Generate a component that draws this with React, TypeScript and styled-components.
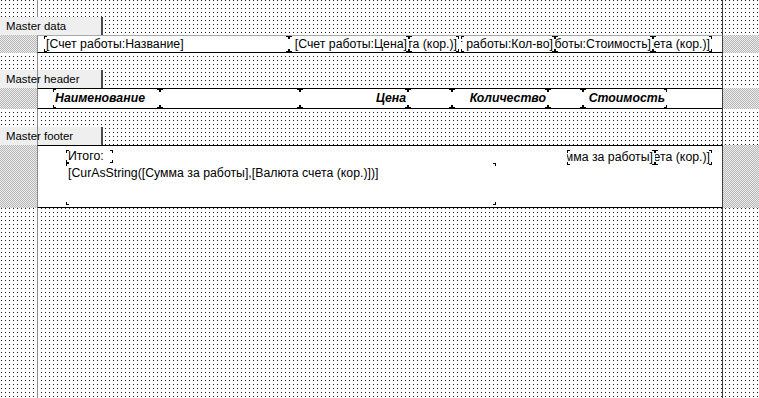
import styled, { createGlobalStyle, css } from 'styled-components'

const GlobalStyle = createGlobalStyle`
  html, body {
    margin: 0;
    padding: 0;
    background: #fff;
    overflow: hidden;
  }
  body {
    font-family: "Liberation Sans", Arial, sans-serif;
    color: #000;
  }
`

const INK = 'linear-gradient(#000, #000)'

// little corner marks that the designer draws round each text object
const corners = css`
  background-image: ${Array(8).fill(INK).join(', ')};
  background-repeat: no-repeat;
  background-size: 1px 3px, 3px 1px, 1px 3px, 3px 1px, 1px 3px, 3px 1px, 1px 3px, 3px 1px;
  background-position: left top, left top, right top, right top, left bottom, left bottom, right bottom,
    right bottom;
`

const Page = styled.div`
  width: 759px;
  height: 398px;
  display: flex;
  flex-direction: column;
  background:
    linear-gradient(
      90deg,
      transparent 37px,
      #8a8a8a 37px,
      #8a8a8a 38px,
      transparent 38px,
      transparent 722px,
      #404040 722px,
      #404040 723px,
      transparent 723px
    ),
    linear-gradient(90deg, transparent 1px, #fff 1px) 1px 0 / 4px 4px,
    linear-gradient(180deg, transparent 1px, #fff 1px) 1px 0 / 4px 4px,
    #1a1a1a;
`

const Gap = styled.div<{ $h: number }>`
  height: ${(p) => p.$h}px;
  flex: none;
`

const TabRow = styled.div`
  display: flex;
  height: 18px;
  flex: none;
`

const Tab = styled.div<{ $cut?: boolean }>`
  width: 95px;
  padding-left: 6px;
  border-right: 2px solid #4a4a4a;
  background: ${(p) =>
    p.$cut
      ? 'linear-gradient(90deg, transparent 37px, #8a8a8a 37px, #8a8a8a 38px, transparent 38px), #efefef'
      : '#efefef'};
  font-size: 11.4px;
  line-height: 18px;
  white-space: nowrap;
`

const BandRow = styled.div`
  display: grid;
  grid-template-columns: 37px 686px 1fr;
  flex: none;
`

const Hatch = styled.div`
  background: repeating-conic-gradient(#b8b8b8 0 25%, #ececec 0 50%) 0 0 / 2px 2px;
`

const Band = styled.div<{ $h: number; $top: string }>`
  box-sizing: border-box;
  height: ${(p) => p.$h}px;
  background: #fff;
  border-left: 1px solid #8a8a8a;
  border-right: 1px solid #404040;
  border-top: 1px solid ${(p) => p.$top};
  border-bottom: 1px solid #000;
`

const Line = styled.div<{ $pad: number }>`
  display: flex;
  padding-left: ${(p) => p.$pad}px;
`

const Obj = styled.div<{ $w: number; $h: number; $right?: boolean; $bold?: boolean; $lh?: number; $pt?: number }>`
  ${corners}
  box-sizing: border-box;
  flex: none;
  width: ${(p) => p.$w}px;
  height: ${(p) => p.$h}px;
  display: flex;
  align-items: flex-start;
  justify-content: ${(p) => (p.$right ? 'flex-end' : 'flex-start')};
  overflow: hidden;
  white-space: nowrap;
  padding: ${(p) => p.$pt ?? 0}px 2px 0 2px;
  font-size: 12.3px;
  line-height: ${(p) => p.$lh ?? p.$h}px;
  font-weight: ${(p) => (p.$bold ? 'bold' : 'normal')};
  font-style: ${(p) => (p.$bold ? 'italic' : 'normal')};

  & > span {
    flex: none;
  }
`

const Spacer = styled.div<{ $w: number }>`
  width: ${(p) => p.$w}px;
  flex: none;
`

const FooterBody = styled.div`
  display: flex;
  padding: 4px 0 0 28px;
`

const Column = styled.div`
  display: flex;
  flex-direction: column;
`

const Group = styled.div`
  display: flex;
  margin-left: 71px;
`

const dataCells = [
  { w: 245, text: '[Счет работы:Название]' },
  { w: 120, text: '[Счет работы:Цена]', right: true },
  { w: 50, text: '[Валюта счета (кор.)]', right: true },
  { gap: 2 },
  { w: 94, text: '[Счет работы:Кол-во]', right: true },
  { w: 98, text: '[Счет работы:Стоимость]', right: true },
  { w: 59, text: '[Валюта счета (кор.)]', right: true },
]

const headerCells = [
  { w: 107, text: 'Наименование' },
  { w: 140, text: '' },
  { w: 108, text: 'Цена', right: true },
  { w: 44, text: '' },
  { w: 96, text: 'Количество', right: true },
  { w: 35, text: '' },
  { w: 84, text: 'Стоимость', right: true },
]

export default function App() {
  return (
    <>
      <GlobalStyle />
      <Page>
        <Gap $h={17} />
        <TabRow>
          <Tab>Master data</Tab>
        </TabRow>
        <BandRow>
          <Hatch />
          <Band $h={18} $top="#a8a8a8">
            <Line $pad={6}>
              {dataCells.map((c, i) =>
                c.gap ? (
                  <Spacer key={i} $w={c.gap} />
                ) : (
                  <Obj key={i} $w={c.w!} $h={16} $right={c.right}>
                    <span>{c.text}</span>
                  </Obj>
                ),
              )}
            </Line>
          </Band>
          <Hatch />
        </BandRow>

        <Gap $h={17} />
        <TabRow>
          <Tab $cut>Master header</Tab>
        </TabRow>
        <BandRow>
          <Hatch />
          <Band $h={21} $top="#000">
            <Line $pad={15}>
              {headerCells.map((c, i) => (
                <Obj key={i} $w={c.w} $h={19} $right={c.right} $bold>
                  <span>{c.text}</span>
                </Obj>
              ))}
            </Line>
          </Band>
          <Hatch />
        </BandRow>

        <Gap $h={18} />
        <TabRow>
          <Tab $cut>Master footer</Tab>
        </TabRow>
        <BandRow>
          <Hatch />
          <Band $h={63} $top="#000">
            <FooterBody>
              <Column>
                <Obj $w={47} $h={13}>
                  <span>Итого:</span>
                </Obj>
                <Obj $w={430} $h={42} $lh={14} $pt={3}>
                  <span>[CurAsString([Сумма за работы],[Валюта счета (кор.)])]</span>
                </Obj>
              </Column>
              <Group>
                <Obj $w={88} $h={15} $right>
                  <span>[Сумма за работы]</span>
                </Obj>
                <Obj $w={57} $h={15} $right>
                  <span>[Валюта счета (кор.)]</span>
                </Obj>
              </Group>
            </FooterBody>
          </Band>
          <Hatch />
        </BandRow>
      </Page>
    </>
  )
}
